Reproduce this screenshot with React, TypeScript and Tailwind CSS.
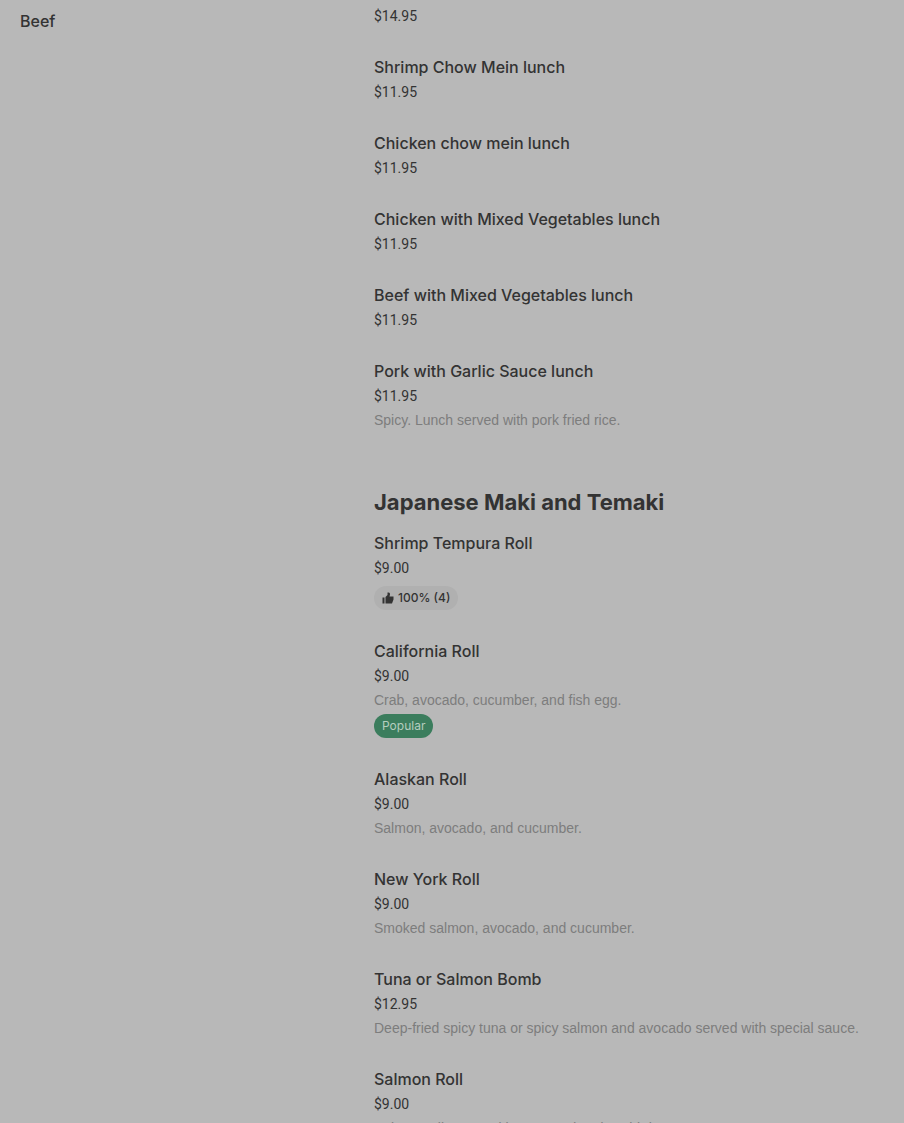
type Item = {
  name: string;
  price: string;
  description?: string;
  rating?: string;
  popular?: boolean;
};

const lunchItems: Item[] = [
  { name: "Shrimp Fried Rice", price: "$14.95" },
  { name: "Shrimp Chow Mein lunch", price: "$11.95" },
  { name: "Chicken chow mein lunch", price: "$11.95" },
  { name: "Chicken with Mixed Vegetables lunch", price: "$11.95" },
  { name: "Beef with Mixed Vegetables lunch", price: "$11.95" },
  {
    name: "Pork with Garlic Sauce lunch",
    price: "$11.95",
    description: "Spicy. Lunch served with pork fried rice.",
  },
];

const makiItems: Item[] = [
  { name: "Shrimp Tempura Roll", price: "$9.00", rating: "100% (4)" },
  {
    name: "California Roll",
    price: "$9.00",
    description: "Crab, avocado, cucumber, and fish egg.",
    popular: true,
  },
  {
    name: "Alaskan Roll",
    price: "$9.00",
    description: "Salmon, avocado, and cucumber.",
  },
  {
    name: "New York Roll",
    price: "$9.00",
    description: "Smoked salmon, avocado, and cucumber.",
  },
  {
    name: "Tuna or Salmon Bomb",
    price: "$12.95",
    description:
      "Deep-fried spicy tuna or spicy salmon and avocado served with special sauce.",
  },
  {
    name: "Salmon Roll",
    price: "$9.00",
    description: "Salmon roll wrapped in seaweed and sushi rice.",
  },
];

const ThumbIcon = () => (
  <svg viewBox="0 0 24 24" className="h-3 w-3" fill="currentColor" aria-hidden="true">
    <path d="M1 11h4v12H1zM7 10l4-4V1h2c3 0 3 2 3 4l-1 4h8v6l-3 8H7z" />
  </svg>
);

const MenuItem = ({ name, price, description, rating, popular }: Item) => (
  <li className="text-[14px] leading-6">
    <h3 className="mb-0.5 text-[16px] leading-[22px] font-medium">{name}</h3>
    <p className="font-['Roboto','Liberation_Sans',sans-serif]">{price}</p>
    {description && (
      <p className="font-['Liberation_Sans',sans-serif] text-[#7d7d7d]">{description}</p>
    )}
    {rating && (
      <span className="mt-1.5 mb-0.5 flex h-6 w-fit items-center gap-1 rounded-full bg-[#b0b0b0] px-2 text-[12px] font-medium">
        <ThumbIcon />
        {rating}
      </span>
    )}
    {popular && (
      <span className="my-0.5 flex h-6 w-fit items-center rounded-full bg-[#3b7d5d] px-2 text-[12px] text-[#b5cdbf]">
        Popular
      </span>
    )}
  </li>
);

const App = () => {
  return (
    <div className="h-screen overflow-hidden bg-[#b8b8b8] font-['Inter','Liberation_Sans',sans-serif] text-[#333333]">
      <div className="flex">
        <nav className="w-[374px] shrink-0 px-5 pt-[9px]">
          <a href="#beef" className="text-[16px] leading-6 font-medium">
            Beef
          </a>
        </nav>
        <main className="-mt-5 min-w-0 flex-1">
          <ul className="flex flex-col gap-7">
            {lunchItems.map((item) => (
              <MenuItem key={item.name} {...item} />
            ))}
          </ul>
          <h2 className="mt-[52px] mb-3 text-[22px] leading-9 font-bold">
            Japanese Maki and Temaki
          </h2>
          <ul className="flex flex-col gap-7">
            {makiItems.map((item) => (
              <MenuItem key={item.name} {...item} />
            ))}
          </ul>
        </main>
      </div>
    </div>
  );
};

export default App;
